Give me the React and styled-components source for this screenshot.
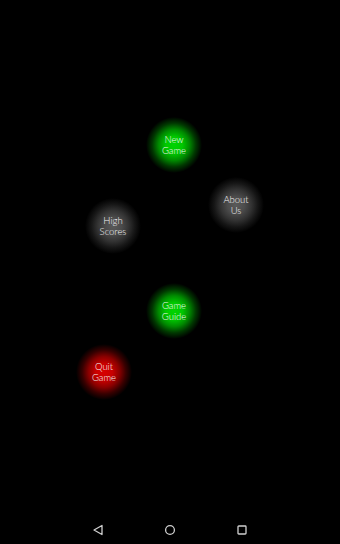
import React from "react";
import styled, { createGlobalStyle } from "styled-components";

const Global = createGlobalStyle`
  html, body { margin: 0; padding: 0; background: #000; }
  #root { width: 340px; height: 544px; }
`;

const Screen = styled.div`
  width: 340px;
  height: 544px;
  background: #000;
  display: flex;
  flex-direction: column;
  overflow: hidden;
`;

const Field = styled.div`
  position: relative;
  flex: 1;
`;

const palettes = {
  green: "radial-gradient(circle closest-side, #00d400 0%, #00c800 30%, #008a00 55%, #003800 78%, #000 100%)",
  gray: "radial-gradient(circle closest-side, #5a5a5a 0%, #4c4c4c 30%, #333 55%, #161616 78%, #000 100%)",
  red: "radial-gradient(circle closest-side, #d80000 0%, #c80000 30%, #8a0000 55%, #380000 78%, #000 100%)",
};

const Orb = styled.button`
  position: absolute;
  width: 56px;
  height: 56px;
  margin: -28px 0 0 -28px;
  border: 0;
  padding: 0;
  border-radius: 50%;
  background: ${(p) => palettes[p.$tone]};
  color: #f4f4f4;
  font-family: "Lato", "DejaVu Sans", sans-serif;
  font-weight: 300;
  font-size: 9.5px;
  line-height: 11px;
  text-align: center;
  display: flex;
  align-items: center;
  justify-content: center;
  cursor: pointer;
`;

const NavBar = styled.div`
  height: 28px;
  display: flex;
  justify-content: center;
  align-items: center;
`;

const NavSlot = styled.div`
  width: 72px;
  display: flex;
  justify-content: center;
  align-items: center;
`;

const orbs = [
  { label: ["New", "Game"], x: 174, y: 145, tone: "green" },
  { label: ["About", "Us"], x: 236, y: 205, tone: "gray" },
  { label: ["High", "Scores"], x: 113, y: 226, tone: "gray" },
  { label: ["Game", "Guide"], x: 174, y: 311, tone: "green" },
  { label: ["Quit", "Game"], x: 104, y: 372, tone: "red" },
];

export default function App() {
  return (
    <>
      <Global />
      <Screen>
        <Field>
          {orbs.map((o) => (
            <Orb key={o.label.join(" ")} $tone={o.tone} style={{ left: o.x, top: o.y }}>
              <span>
                {o.label[0]}
                <br />
                {o.label[1]}
              </span>
            </Orb>
          ))}
        </Field>
        <NavBar>
          <NavSlot>
            <svg width="12" height="12" viewBox="0 0 12 12">
              <path d="M10 1.5 L2 6 L10 10.5 Z" fill="none" stroke="#d0d0d0" strokeWidth="1.3" strokeLinejoin="round" />
            </svg>
          </NavSlot>
          <NavSlot>
            <svg width="12" height="12" viewBox="0 0 12 12">
              <circle cx="6" cy="6" r="4.4" fill="none" stroke="#d0d0d0" strokeWidth="1.3" />
            </svg>
          </NavSlot>
          <NavSlot>
            <svg width="12" height="12" viewBox="0 0 12 12">
              <rect x="2" y="2" width="8" height="8" rx="0.8" fill="none" stroke="#d0d0d0" strokeWidth="1.3" />
            </svg>
          </NavSlot>
        </NavBar>
      </Screen>
    </>
  );
}
